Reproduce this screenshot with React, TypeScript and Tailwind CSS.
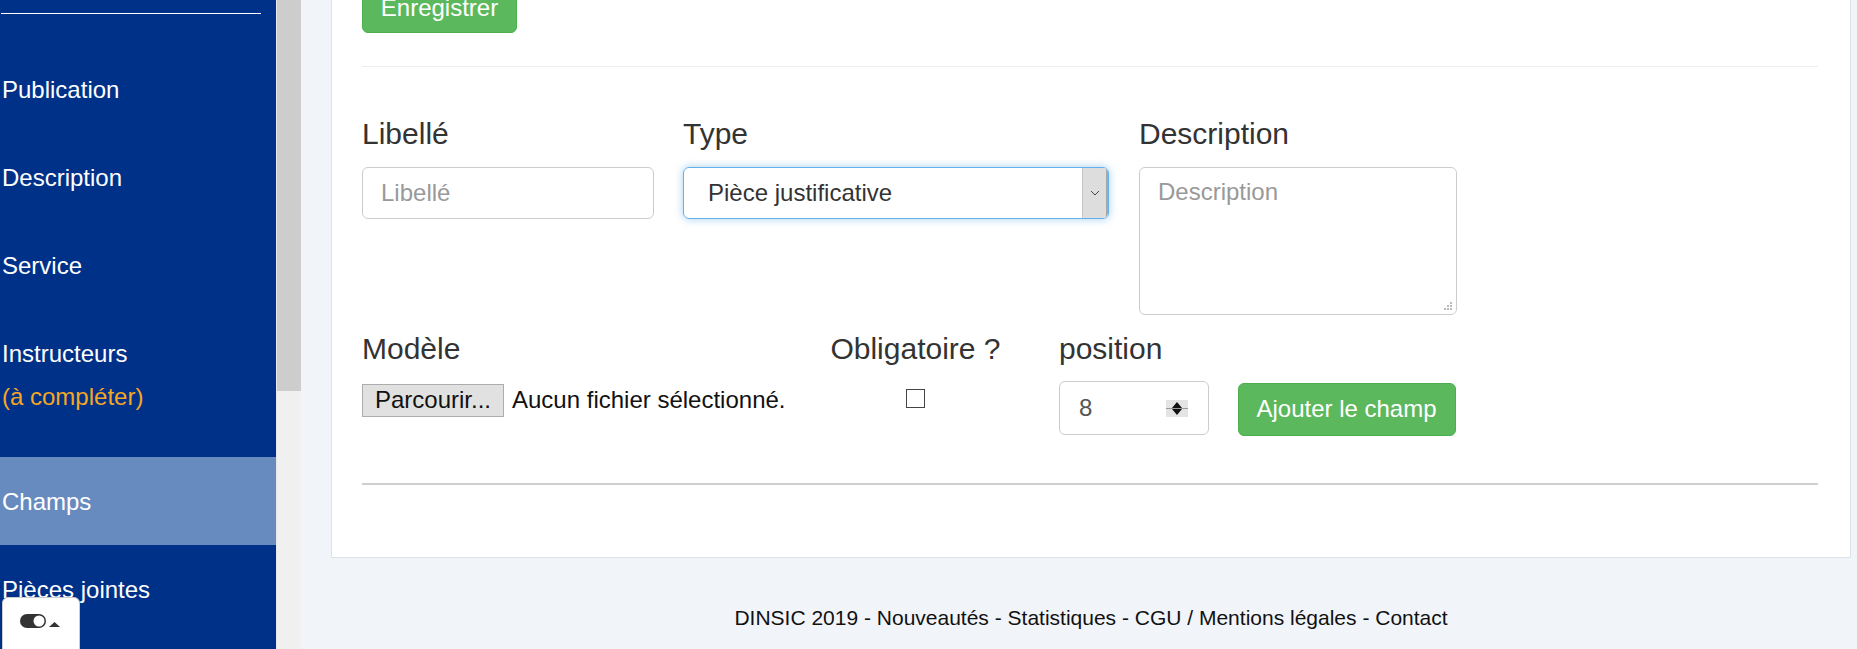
const navItems = ["Publication", "Description", "Service"];

const Field = ({ label, children }: { label: string; children: React.ReactNode }) => (
  <div className="flex flex-col">
    <label className="text-[30px] leading-[33px] text-[#333] mb-[17.5px]">{label}</label>
    {children}
  </div>
);

export default function App() {
  return (
    <div className="h-[649px] w-[1857px] overflow-hidden flex font-['Liberation_Sans',Arial,sans-serif]">
      {/* Sidebar */}
      <aside className="relative w-[276px] shrink-0 bg-[#003189] text-white text-[24px]">
        <div className="pt-[13px]">
          <div className="ml-[1px] w-[260px] h-px bg-white" />
        </div>
        <nav className="mt-[31px]">
          {navItems.map((item) => (
            <div key={item} className="pl-[2px] py-[22.5px] leading-[43px]">
              {item}
            </div>
          ))}
          <div className="pl-[2px] pt-[22.5px] pb-[39.5px] leading-[43px]">
            <div>Instructeurs</div>
            <div className="text-[#f5a623]">(à compléter)</div>
          </div>
          <div className="pl-[2px] py-[22.5px] leading-[43px] bg-[#688bbf]">Champs</div>
          <div className="pl-[2px] py-[22.5px] leading-[43px]">Pièces jointes</div>
        </nav>

        {/* theme toggle */}
        <div className="absolute left-[2px] bottom-[-10px] w-[78px] h-[62px] bg-white border border-[#ccc] rounded-t-[6px]">
          <svg className="ml-[16px] mt-[15px]" width="44" height="16" viewBox="0 0 44 16">
            <rect x="1" y="1" width="26" height="14" rx="7" fill="#333" />
            <circle cx="20" cy="8" r="5.5" fill="#fff" />
            <polygon points="30,14 35.5,9 41,14" fill="#333" />
          </svg>
        </div>
      </aside>

      {/* scrollbar */}
      <div className="w-[25px] shrink-0 flex flex-col bg-[#f0f0f0] border-l border-[#e8e8e8]">
        <div className="h-[391px] bg-[#cdcdcd]" />
      </div>

      {/* Main */}
      <main className="flex-1 bg-[#f1f4f9] pl-[30px] pr-[6px] flex flex-col">
        <div className="-mt-[40px] bg-white border border-[#dde2ea] pt-[21px] pl-[30px] pr-[32px] pb-[72px]">
          <button className="w-[155px] h-[51px] bg-[#5cb85c] border border-[#4cae4c] rounded-[6px] text-white text-[24px]">
            Enregistrer
          </button>
          <div className="mt-[33px] h-px bg-[#eee]" />

          {/* Row 1 */}
          <div className="mt-[49.5px] flex items-start">
            <div className="w-[292px]">
              <Field label="Libellé">
                <input
                  readOnly
                  placeholder="Libellé"
                  className="h-[52px] w-full border border-[#ccc] rounded-[6px] px-[18px] text-[24px] text-[#555] placeholder:text-[#999] outline-none"
                />
              </Field>
            </div>
            <div className="w-[426px] ml-[29px]">
              <Field label="Type">
                <div className="h-[52px] w-full flex border border-[#66afe9] rounded-[6px] shadow-[0_0_8px_rgba(102,175,233,0.6)] overflow-hidden">
                  <div className="flex-1 flex items-center pl-[24px] text-[24px] text-[#333]">Pièce justificative</div>
                  <div className="w-[26px] bg-[#dddddd] border-l border-[#c8c8c8] border-r-2 border-r-[#a8a8a8] flex items-center justify-center">
                    <svg width="10" height="6" viewBox="0 0 10 6">
                      <polyline points="1,1 5,5 9,1" fill="none" stroke="#444" strokeWidth="1" />
                    </svg>
                  </div>
                </div>
              </Field>
            </div>
            <div className="w-[318px] ml-[30px]">
              <Field label="Description">
                <div className="relative">
                  <textarea
                    readOnly
                    placeholder="Description"
                    className="block h-[148px] w-full resize-none border border-[#ccc] rounded-[6px] px-[18px] py-[9px] text-[24px] leading-[30px] text-[#555] placeholder:text-[#999] outline-none"
                  />
                  {/* resize grip */}
                  <svg className="absolute right-[4px] bottom-[4px]" width="9" height="9" viewBox="0 0 9 9">
                    <rect x="6" y="0" width="2" height="2" fill="#bbb" />
                    <rect x="3" y="3" width="2" height="2" fill="#bbb" />
                    <rect x="6" y="3" width="2" height="2" fill="#bbb" />
                    <rect x="0" y="6" width="2" height="2" fill="#bbb" />
                    <rect x="3" y="6" width="2" height="2" fill="#bbb" />
                    <rect x="6" y="6" width="2" height="2" fill="#bbb" />
                  </svg>
                </div>
              </Field>
            </div>
          </div>

          {/* Row 2 */}
          <div className="mt-[16.5px] flex items-start">
            <div className="w-[438px]">
              <label className="block text-[30px] leading-[33px] text-[#333] mb-[17.5px]">Modèle</label>
              <div className="flex items-center text-[24px] text-[#111]">
                <div className="h-[33px] w-[142px] bg-[#e1e1e1] border border-[#adadad] flex items-center justify-center">
                  Parcourir...
                </div>
                <span className="ml-[8px]">Aucun fichier sélectionné.</span>
              </div>
            </div>
            <div className="w-[231px] flex flex-col items-center">
              <label className="block text-[30px] leading-[33px] text-[#333]">Obligatoire ?</label>
              <div className="mt-[24px] w-[19px] h-[19px] border border-[#444] bg-white" />
            </div>
            <div className="w-[150px] ml-[28px]">
              <label className="block text-[30px] leading-[33px] text-[#333] mb-[16.5px]">position</label>
              <div className="h-[54px] w-full border border-[#ccc] rounded-[6px] flex items-center pl-[19px] pr-[20px] text-[24px] text-[#555]">
                <span className="flex-1">8</span>
                <div className="w-[22px] h-[17px] bg-[#e4e4e4] flex flex-col items-center justify-between py-[2px]">
                  <svg width="12" height="6" viewBox="0 0 12 6">
                    <polygon points="1,6 6,0 11,6" fill="#111" />
                  </svg>
                  <div className="w-full h-px bg-[#999]" />
                  <svg width="12" height="6" viewBox="0 0 12 6">
                    <polygon points="1,0 6,6 11,0" fill="#111" />
                  </svg>
                </div>
              </div>
            </div>
            <button className="ml-[28.5px] mt-[51px] w-[218px] h-[53px] bg-[#5cb85c] border border-[#4cae4c] rounded-[6px] text-white text-[24px]">
              Ajouter le champ
            </button>
          </div>

          <div className="mt-[47px] h-[2px] bg-[#cfcfcf]" />
        </div>

        <footer className="mt-[45px] text-center text-[21px] leading-[30px] text-[#111]">
          DINSIC 2019 - <a>Nouveautés</a> - <a>Statistiques</a> - <a>CGU / Mentions légales</a> - <a>Contact</a>
        </footer>
      </main>
    </div>
  );
}
